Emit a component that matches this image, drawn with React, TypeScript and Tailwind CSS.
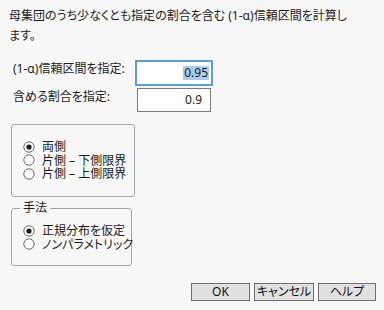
import React from 'react'

// --- Radio glyph ---
const Radio: React.FC<{ checked?: boolean }> = ({ checked }) => (
  <svg width="12" height="12" viewBox="0 0 12 12" className="shrink-0">
    <circle cx="6" cy="6" r="5.2" fill="#ffffff" stroke="#6b6b6b" strokeWidth="1" />
    {checked && <circle cx="6" cy="6" r="2.6" fill="#1a1a1a" />}
  </svg>
)

const Option: React.FC<{ label: string; checked?: boolean }> = ({ label, checked }) => (
  <div className="flex items-center gap-[7px] h-[13.5px] whitespace-nowrap">
    <Radio checked={checked} />
    <span className="leading-[13px]">{label}</span>
  </div>
)

const Button: React.FC<{ label: string; w: string }> = ({ label, w }) => (
  <button
    className={`${w} h-[18px] bg-[#e1e1e1] border border-[#6f6f6f] text-[12px] leading-[14px] text-[#111] whitespace-nowrap`}
  >
    {label}
  </button>
)

export default function App() {
  return (
    <div
      className="w-[384px] h-[310px] bg-[#f7f7f7] text-[#1b1b1b] text-[12px] overflow-hidden [font-feature-settings:'palt']"
      style={{ fontFamily: "'Noto Sans', 'Noto Sans CJK JP', sans-serif" }}
    >
      <p className="pl-[9px] pt-[6px] leading-[20px] whitespace-nowrap">
        母集団のうち少なくとも指定の割合を含む (1-α)信頼区間を計算し
        <br />
        ます。
      </p>

      {/* inputs */}
      <div className="mt-[14px] flex items-start pl-[13px] whitespace-nowrap">
        <span className="w-[122px] leading-[18px]">(1-α)信頼区間を指定:</span>
        <div className="w-[78px] h-[26px] border-2 border-[#5b9ee0] bg-white flex items-center justify-end pr-[2px]">
          <span className="bg-[#a8cdf0] leading-[14px] px-[1px]">0.95</span>
        </div>
      </div>
      <div className="mt-[2px] flex items-start pl-[13px] whitespace-nowrap">
        <span className="w-[124px] leading-[18px]">含める割合を指定:</span>
        <div className="w-[74px] h-[24px] border border-[#7a7a7a] bg-white flex items-center justify-end pr-[8px]">
          <span className="leading-[14px]">0.9</span>
        </div>
      </div>

      {/* side group */}
      <div className="mt-[12px] ml-[11px] w-[124px] h-[73px] border border-[#a5a5a5] rounded-[3px] pt-[15px] pl-[11px]">
        <Option label="両側" checked />
        <Option label="片側 – 下側限界" />
        <Option label="片側 – 上側限界" />
      </div>

      {/* method group */}
      <fieldset className="mt-[4px] ml-[11px] w-[121px] min-w-0 h-[65px] border border-[#a5a5a5] rounded-[3px] pl-[11px]">
        <legend className="ml-[-3px] px-[3px] leading-[14px]">手法</legend>
        <div className="pt-[9px]">
          <Option label="正規分布を仮定" checked />
          <Option label="ノンパラメトリック" />
        </div>
      </fieldset>

      {/* buttons */}
      <div className="mt-[17px] flex justify-end gap-[4px] pr-[8px]">
        <Button label="OK" w="w-[59px]" />
        <Button label="キャンセル" w="w-[60px]" />
        <Button label="ヘルプ" w="w-[58px]" />
      </div>
    </div>
  )
}
